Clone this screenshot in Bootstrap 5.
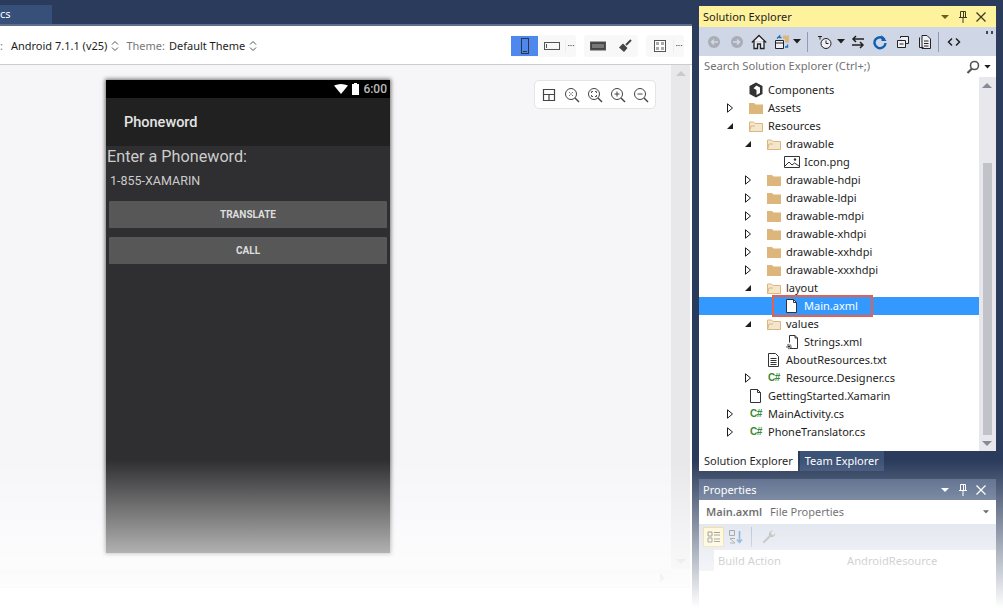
<!DOCTYPE html>
<html lang="en">
<head>
  <meta charset="utf-8">
  <title>Main.axml</title>
  <link href="https://cdn.jsdelivr.net/npm/bootstrap@5.3.2/dist/css/bootstrap.min.css" rel="stylesheet">
  <style>
    html, body { height: 608px; overflow: hidden; }
    body { background: #2a3b5b; font-family: "Noto Sans", "Liberation Sans", sans-serif; font-size: 11px; color: #1e1e1e; }
    .shell { width: 1003px; height: 608px; }
    .fade-out { position: absolute; inset: 0; pointer-events: none; background: linear-gradient(to bottom, rgba(255,255,255,0) 460px, #fff 608px); }

    /* left: designer */
    .left-col { width: 692px; background: #fff; }
    .tab-strip { height: 24px; padding-top: 5px; background: #2a3b5b; }
    .doc-tab { width: 52px; height: 19px; background: #36507a; color: #fff; line-height: 18px; text-align: left; overflow: hidden; }
    .tab-rule { height: 2px; background: #5f6e8a; }
    .design-bar { height: 39px; padding-top: 2px; background: #fff; border-bottom: 1px solid #ccc; }
    .bar-label { color: #777; }
    .updown { width: 8px; height: 12px; margin: 0 7px 0 4px; }
    .btn-grp { height: 22px; background: #f8f8f8; border-radius: 3px; }
    .bar-btn { width: 27px; height: 20px; }
    .bar-btn.is-on { background: #4d88ee; }
    .dots { width: 11px; text-align: center; font-size: 9px; line-height: 14px; color: #444; border-left: 1px solid #eee; }
    .canvas-wrap { height: 504px; }
    .canvas { background: #f6f5f8; padding: 15px 0 0 106px; }
    .vscroll { width: 19px; background: #e8e7ea; }
    .vscroll .scroll-up { left: 5px; border-bottom-color: #c9c9ce; }
    .vscroll .scroll-down { left: 5px; border-top-color: #c9c9ce; }
    .hscroll { height: 19px; background: #f0f0f0; border-bottom: 1px solid #ddd; margin-right: 2px; padding-right: 25px; }
    .hscroll-arrow { width: 0; height: 0; border: 5px solid transparent; border-left-color: #c9c9ce; border-right: 0; }
    .left-pad { width: 2px; background: #fff; }
    .zoom-tools { position: absolute; left: 534px; top: 15px; width: 122px; height: 29px; background: #fff; border: 1px solid #e4e4e4; border-radius: 5px; padding: 0 6px; }

    /* phone */
    .phone { width: 284px; height: 473px; background: #2f2e30; box-shadow: 0 0 4px 1px rgba(0,0,0,.55); font-family: Roboto, "Noto Sans", sans-serif; color: #e4e4e4; }
    .phone-status { height: 18px; background: #000; padding-right: 3px; font-size: 12px; color: #bbb; font-weight: 500; }
    .phone-bar { height: 48px; background: #222122; padding: 2px 0 0 18px; font-size: 14.5px; font-weight: 500; color: #e4e4e4; }
    .phone-label { font-size: 16.2px; line-height: 20px; padding: 0 1px; margin-top: 1px; color: #ccc; }
    .phone-input { font-size: 12.5px; line-height: 16px; margin: 6px 0 0 4px; color: #ccc; }
    .phone-btn { display: block; height: 27px; width: 278px; margin: 0 0 9px 3px; padding: 0; background: #575757; color: #dedede; border: 0; border-radius: 1px; font-size: 10px; font-weight: 700; line-height: 27px; }
    .phone-btn:hover { background: #575757; color: #dedede; }

    /* right: dock */
    .dock { width: 311px; padding: 6px 7px 0 7px; }
    .pane-head { height: 21px; padding: 0 7px 0 4px; background: #fff29d; }
    .pane-head.is-idle { background: #4d6082; color: #fff; }
    .head-title { padding-top: 1px; }
    .head-ico { width: 16px; height: 16px; margin-left: 2px; }
    .se-bar { height: 29px; background: #cfd6e5; padding-left: 4px; }
    .tb-slot { width: 22.5px; height: 22px; }
    .tb-slot svg { width: 16px; height: 16px; }
    .tb-dd { width: 8px; height: 5px; margin: 0 2px 0 0; }
    .tb-sep { width: 1px; height: 20px; background: #8e9bb3; margin: 0 6px 0 4px; }
    .tb-sep.is-tight { margin: 0 4px 0 1.5px; }
    .tb-sep.is-prop { margin: 0 5px 0 3px; }
    .overflow-mark { margin: 4px 3px 0 auto; }
    .search-box { height: 21px; background: #fff; padding: 0 5px 0 5px; color: #717171; font-size: 11.2px; }
    .tree-wrap { height: 374px; background: #fff; }
    .tree { padding-top: 4px; --bs-list-group-border-width: 0; }
    .tree-row { display: flex; align-items: center; height: 18px; padding: 0; border: 0; background: transparent; color: #1e1e1e; white-space: nowrap; }
    .tree-row.active { background: #3399ff; color: #fff; }
    .lv1 { padding-left: 26px; }
    .lv2 { padding-left: 44px; }
    .lv3 { padding-left: 62px; }
    .arrow-slot { width: 23px; height: 10px; flex: none; }
    .arrow-slot svg { width: 10px; height: 10px; display: block; }
    .ico-slot { width: 18px; height: 16px; flex: none; text-align: left; margin-right: 2px; }
    .ico-slot svg { width: 16px; height: 16px; display: block; }
    .csharp { font-family: "Liberation Sans", sans-serif; font-weight: 700; font-size: 10px; line-height: 16px; color: #388a34; letter-spacing: -.5px; padding-left: 2px; }
    .picked { display: inline-flex; align-items: center; height: 22px; margin-left: -12px; padding: 0 13px 0 10px; border: 2px solid #e8604c; }
    .tree-scroll { width: 17px; background: #e8e8ec; }
    .thumb { position: absolute; left: 4px; width: 9px; top: 86px; height: 272px; background: #c2c3c9; }
    .scroll-up { position: absolute; left: 3px; top: 6px; width: 0; height: 0; border: 5px solid transparent; border-bottom-color: #868999; border-top: 0; }
    .scroll-down { position: absolute; left: 3px; bottom: 5px; width: 0; height: 0; border: 5px solid transparent; border-top-color: #868999; border-bottom: 0; }
    .dock-tabs { height: 20px; }
    .dock-tab { height: 20px; padding: 0 5px; line-height: 20px; background: #3d5277; color: #fff; margin-left: 2px; }
    .dock-tab.is-on { background: #fff; color: #1e1e1e; margin-left: 0; }
    .props { margin-top: 8px; }
    .prop-target { height: 24px; background: #fff; padding: 0 7px; }
    .prop-bar { height: 26px; background: #cfd6e5; padding-left: 4px; }
    .prop-on { width: 21px; height: 20px; background: #fdf4bf; border: 1px solid #e5c365; }
    .prop-row { height: 21px; background: #fff; color: #6d6d6d; font-size: 11.2px; }
    .prop-gutter { width: 15px; background: #cfd6e5; }
    .prop-name { width: 133px; padding-left: 4px; line-height: 22px; }
    .prop-value { line-height: 22px; }
    .props-body { height: 60px; background: #fff; }
  </style>
</head>
<body>
  <svg width="0" height="0" class="position-absolute">
    <symbol id="tri-right" viewBox="0 0 10 10"><path d="M2.500.8 7.500 5l-5 4.200z" fill="#fff" stroke="#1e1e1e" stroke-width="1"/></symbol>
    <symbol id="tri-down" viewBox="0 0 10 10"><path d="M8 2v6H2z" fill="#1e1e1e"/></symbol>
    <symbol id="folder" viewBox="0 0 16 16"><path d="M1 3h5l1.500 1.500H15V14H1z" fill="#dcb67a"/></symbol>
    <symbol id="folder-open" viewBox="0 0 16 16"><path d="M1.500 4h4l1.500 1.500h7.500v8h-13z" fill="#f3e6cc" stroke="#dcb67a"/><path d="M1.500 13.500 3 8h4" fill="none" stroke="#dcb67a"/></symbol>
    <symbol id="file" viewBox="0 0 16 16"><path d="M2.500 1.500h7l3 3v10h-10z" fill="#fff" stroke="#333"/><path d="M9.500 1.500v3h3" fill="none" stroke="#333"/></symbol>
    <symbol id="file-text" viewBox="0 0 16 16"><path d="M2.500 1.500h7l3 3v10h-10z" fill="#fff" stroke="#333"/><path d="M4.500 6.500h6M4.500 8.500h6M4.500 10.500h6M4.500 12.500h6" stroke="#333"/></symbol>
    <symbol id="image" viewBox="0 0 16 16"><path d="M.5 2.500h15v11H.5z" fill="#fff" stroke="#333"/><path d="M1 12l4-4 3 3 2.500-2 4.500 3" fill="none" stroke="#333"/><circle cx="11" cy="5.500" r="1.200" fill="#333"/></symbol>
    <symbol id="xml-file" viewBox="0 0 16 16"><path d="M5.500 1.500h5.500l2.500 2.500v10.500H6" fill="#fff" stroke="#333"/><path d="M11 1.500V4h2.500M5.500 1.500v7" fill="none" stroke="#333"/><circle cx="5" cy="12.500" r="2.200" fill="none" stroke="#333" stroke-dasharray="1.500 1"/><rect x="3.700" y="11.500" width="2.600" height="2" fill="#333"/></symbol>
    <symbol id="cube" viewBox="0 0 16 16"><path d="M8 .5l6.500 3.500v8L8 15.500 1.500 12V4z" fill="#333"/><path d="M8.500 3.500l3.500 2v5.500l-3.500 2V8L5.500 6.200z" fill="#fff"/></symbol>
    <symbol id="updown" viewBox="0 0 8 12"><path d="M1 4.500 4 1.500l3 3M1 7.500l3 3 3-3" fill="none" stroke="#555"/></symbol>
    <symbol id="caret" viewBox="0 0 8 5"><path d="M0 0h8L4 4.500z" fill="#1e1e1e"/></symbol>
  </svg>

  <div class="shell d-flex">
    <div class="left-col d-flex flex-column flex-shrink-0">
      <div class="tab-strip"><div class="doc-tab">cs</div></div>
      <div class="tab-rule"></div>
      <div class="design-bar d-flex align-items-center text-nowrap">
        <span class="bar-label me-2">:</span>
        <span>Android 7.1.1 (v25)</span>
        <svg class="updown"><use href="#updown"/></svg>
        <span class="bar-label me-1">Theme:</span>
        <span>Default Theme</span>
        <svg class="updown"><use href="#updown"/></svg>
        <div class="ms-auto d-flex align-items-center gap-2 pe-2">
          <div class="btn-grp d-flex align-items-center">
            <div class="bar-btn is-on d-flex align-items-center justify-content-center">
              <svg width="10" height="16" viewBox="0 0 10 16"><rect x="1.500" y=".5" width="7" height="15" fill="none" stroke="#334"/><path d="M3 13.500h4" stroke="#334"/></svg>
            </div>
            <div class="bar-btn d-flex align-items-center justify-content-center">
              <svg width="16" height="10" viewBox="0 0 16 10"><rect x=".5" y="1.500" width="15" height="7" fill="none" stroke="#555"/><path d="M2.500 3v4" stroke="#555"/></svg>
            </div>
            <div class="dots">&#183;&#183;&#183;</div>
          </div>
          <div class="btn-grp d-flex align-items-center">
            <div class="bar-btn d-flex align-items-center justify-content-center">
              <svg width="16" height="10" viewBox="0 0 16 10"><rect x=".5" y="1" width="15" height="8" fill="#444" stroke="#555"/><rect x="2" y="3" width="12" height="4" fill="#777"/></svg>
            </div>
            <div class="bar-btn d-flex align-items-center justify-content-center">
              <svg width="14" height="14" viewBox="0 0 14 14"><path d="M13 1 8 6" stroke="#444" stroke-width="2"/><path d="M5 4.500 9.500 9 6 13 1 8.500z" fill="#444"/></svg>
            </div>
          </div>
          <div class="btn-grp d-flex align-items-center">
            <div class="bar-btn d-flex align-items-center justify-content-center">
              <svg width="12" height="12" viewBox="0 0 12 12"><rect x=".5" y=".5" width="11" height="11" fill="#fff" stroke="#555"/><path d="M2 2h3v3H2zM7 2h3v3H7zM2 7h3v3H2zM7 7h3v3H7z" fill="#aaa"/></svg>
            </div>
            <div class="dots">&#183;&#183;&#183;</div>
          </div>
        </div>
      </div>
      <div class="canvas-wrap d-flex">
        <div class="canvas flex-grow-1 position-relative">
          <div class="phone">
            <div class="phone-status d-flex align-items-center justify-content-end">
              <svg class="me-1" width="14" height="10" viewBox="0 0 14 10"><path d="M0 1.500Q7-1.500 14 1.500L7 10z" fill="#fff"/></svg>
              <svg class="me-1" width="7" height="12" viewBox="0 0 7 12"><path d="M2 0h3v1h2v11H0V1h2z" fill="#fff"/></svg>
              <span>6:00</span>
            </div>
            <div class="phone-bar d-flex align-items-center">Phoneword</div>
            <div class="phone-label">Enter a Phoneword:</div>
            <div class="phone-input">1-855-XAMARIN</div>
            <div class="mt-2 pt-1">
              <button class="btn phone-btn" type="button">TRANSLATE</button>
              <button class="btn phone-btn" type="button">CALL</button>
            </div>
          </div>
          <div class="zoom-tools d-flex align-items-center justify-content-between">
            <svg width="16" height="16" viewBox="0 0 16 16"><path d="M2.500 2.500h11v11h-11zM2.500 7.500h11M8 7.500v6" fill="none" stroke="#444" stroke-width="1.200"/></svg>
            <svg width="16" height="16" viewBox="0 0 16 16"><circle cx="7" cy="7" r="5.500" fill="none" stroke="#444"/><path d="M11 11l4 4" stroke="#444" stroke-width="1.500"/><path d="M5 5l1.500 1.500M9 5 7.500 6.500M5 9l1.500-1.500M9 9 7.500 7.500" stroke="#777"/></svg>
            <svg width="16" height="16" viewBox="0 0 16 16"><circle cx="7" cy="7" r="5.500" fill="none" stroke="#444"/><path d="M11 11l4 4" stroke="#444" stroke-width="1.500"/><path d="M4.500 6V4.500H6M8 4.500h1.500V6M4.500 8v1.500H6M9.500 8v1.500H8" fill="none" stroke="#555"/></svg>
            <svg width="16" height="16" viewBox="0 0 16 16"><circle cx="7" cy="7" r="5.500" fill="none" stroke="#444"/><path d="M11 11l4 4" stroke="#444" stroke-width="1.500"/><path d="M4.500 7h5M7 4.500v5" stroke="#444"/></svg>
            <svg width="16" height="16" viewBox="0 0 16 16"><circle cx="7" cy="7" r="5.500" fill="none" stroke="#444"/><path d="M11 11l4 4" stroke="#444" stroke-width="1.500"/><path d="M4.500 7h5" stroke="#444"/></svg>
          </div>
        </div>
        <div class="vscroll position-relative"><span class="scroll-up"></span><span class="scroll-down"></span></div>
        <div class="left-pad"></div>
      </div>
      <div class="hscroll d-flex align-items-center justify-content-end"><span class="hscroll-arrow"></span></div>
      <div class="flex-grow-1 bg-white"></div>
    </div>

    <div class="dock flex-grow-1 d-flex flex-column">
      <div>
        <div class="pane-head d-flex align-items-center">
          <span class="head-title">Solution Explorer</span>
          <span class="ms-auto d-flex align-items-center">
            <svg class="head-ico" viewBox="0 0 16 16"><path d="M4 6h8L8 10z" fill="#6b5f20"/></svg>
            <svg class="head-ico" viewBox="0 0 16 16"><path d="M5.500 2.500h5v6h-5zM4 8.500h8M8 8.500V14M8.500 3v5" fill="none" stroke="#3c3a20"/></svg>
            <svg class="head-ico" viewBox="0 0 16 16"><path d="M3.500 3.500l9 9M12.500 3.500l-9 9" stroke="#3c3a20" stroke-width="1.300"/></svg>
          </span>
        </div>
        <div class="se-bar d-flex align-items-center">
          <div class="tb-slot d-flex align-items-center justify-content-center"><svg viewBox="0 0 16 16"><circle cx="8" cy="8" r="6" fill="#a8adb8"/><path d="M12 8H6M8 5.500 5.500 8 8 10.500" fill="none" stroke="#d4d9e4" stroke-width="1.500"/></svg></div>
          <div class="tb-slot d-flex align-items-center justify-content-center"><svg viewBox="0 0 16 16"><circle cx="8" cy="8" r="6" fill="#a8adb8"/><path d="M4 8h6M8 5.500 10.500 8 8 10.500" fill="none" stroke="#d4d9e4" stroke-width="1.500"/></svg></div>
          <div class="tb-slot d-flex align-items-center justify-content-center"><svg viewBox="0 0 16 16"><path d="M.8 8.500 8 1.500l7.200 7M3 7v7.500h3.500V10h3v4.500H13V7" fill="#eef0f5" stroke="#222" stroke-width="1.300"/></svg></div>
          <div class="tb-slot d-flex align-items-center justify-content-center"><svg viewBox="0 0 16 16"><path d="M1.500 6.500h8v8h-8z" fill="#eef0f5" stroke="#222"/><path d="M1.500 9h8" stroke="#222"/><path d="M9 1.500h6v7h-4V5H9z" fill="#dcb67a"/><path d="M3 4.500 5.500 2v1.500h2M13.500 10.500V13H11" fill="none" stroke="#1a6fc0" stroke-width="1.300"/></svg></div>
          <svg class="tb-dd"><use href="#caret"/></svg>
          <div class="tb-sep"></div>
          <div class="tb-slot d-flex align-items-center justify-content-center"><svg viewBox="0 0 16 16"><circle cx="9" cy="9.500" r="5" fill="#eef0f5" stroke="#222"/><path d="M9 6.500v3h2.500M1 2.500h4M3 2.500v3" fill="none" stroke="#222"/></svg></div>
          <svg class="tb-dd"><use href="#caret"/></svg>
          <div class="tb-slot d-flex align-items-center justify-content-center"><svg viewBox="0 0 16 16"><path d="M14 5H3M6 2 3 5l3 3M2 11h11M10 8l3 3-3 3" fill="none" stroke="#222" stroke-width="1.500"/></svg></div>
          <div class="tb-slot d-flex align-items-center justify-content-center"><svg viewBox="0 0 16 16"><path d="M12.500 5.500A5.500 5.500 0 1 0 13.500 9" fill="none" stroke="#0f5fb0" stroke-width="2.400"/><path d="M9.500 1v6h5z" fill="#0f5fb0"/></svg></div>
          <div class="tb-slot d-flex align-items-center justify-content-center"><svg viewBox="0 0 16 16"><path d="M2.500 6.500h8v7h-8zM5.500 4v-1.500h8v7H11" fill="#eef0f5" stroke="#222"/><path d="M4.500 10h4" stroke="#222"/></svg></div>
          <div class="tb-slot d-flex align-items-center justify-content-center"><svg viewBox="0 0 16 16"><path d="M2.500 3.500v10h4M5 1.500h5l3.500 3.500v9.500H5z" fill="#eef0f5" stroke="#222"/><path d="M7 7h4.500M7 9.500h4.500M7 12h4.500" stroke="#222"/></svg></div>
          <div class="tb-sep is-tight"></div>
          <div class="tb-slot d-flex align-items-center justify-content-center"><svg viewBox="0 0 16 16"><path d="M6 4.500 2.500 8 6 11.500M10 4.500 13.500 8 10 11.500" fill="none" stroke="#222" stroke-width="1.500"/></svg></div>
          <svg class="overflow-mark align-self-start" width="7" height="4" viewBox="0 0 7 4"><path d="M0 0h2v3H0zM5 0h2v3H5z" fill="#444"/></svg>
        </div>
        <div class="search-box d-flex align-items-center">
          <span>Search Solution Explorer (Ctrl+;)</span>
          <svg class="ms-auto" width="14" height="14" viewBox="0 0 14 14"><circle cx="8.500" cy="5.500" r="4" fill="none" stroke="#555" stroke-width="1.600"/><path d="M6 8.500 1.500 13" stroke="#555" stroke-width="2.200"/></svg>
          <svg class="ms-1" width="7" height="4"><use href="#caret"/></svg>
        </div>
        <div class="tree-wrap d-flex">
          <div class="tree list-group list-group-flush rounded-0 flex-grow-1">
            <div class="list-group-item tree-row lv1"><span class="arrow-slot"></span><span class="ico-slot"><svg><use href="#cube"/></svg></span>Components</div>
            <div class="list-group-item tree-row lv1"><span class="arrow-slot"><svg><use href="#tri-right"/></svg></span><span class="ico-slot"><svg><use href="#folder"/></svg></span>Assets</div>
            <div class="list-group-item tree-row lv1"><span class="arrow-slot"><svg><use href="#tri-down"/></svg></span><span class="ico-slot"><svg><use href="#folder-open"/></svg></span>Resources</div>
            <div class="list-group-item tree-row lv2"><span class="arrow-slot"><svg><use href="#tri-down"/></svg></span><span class="ico-slot"><svg><use href="#folder-open"/></svg></span>drawable</div>
            <div class="list-group-item tree-row lv3"><span class="arrow-slot"></span><span class="ico-slot"><svg><use href="#image"/></svg></span>Icon.png</div>
            <div class="list-group-item tree-row lv2"><span class="arrow-slot"><svg><use href="#tri-right"/></svg></span><span class="ico-slot"><svg><use href="#folder"/></svg></span>drawable-hdpi</div>
            <div class="list-group-item tree-row lv2"><span class="arrow-slot"><svg><use href="#tri-right"/></svg></span><span class="ico-slot"><svg><use href="#folder"/></svg></span>drawable-ldpi</div>
            <div class="list-group-item tree-row lv2"><span class="arrow-slot"><svg><use href="#tri-right"/></svg></span><span class="ico-slot"><svg><use href="#folder"/></svg></span>drawable-mdpi</div>
            <div class="list-group-item tree-row lv2"><span class="arrow-slot"><svg><use href="#tri-right"/></svg></span><span class="ico-slot"><svg><use href="#folder"/></svg></span>drawable-xhdpi</div>
            <div class="list-group-item tree-row lv2"><span class="arrow-slot"><svg><use href="#tri-right"/></svg></span><span class="ico-slot"><svg><use href="#folder"/></svg></span>drawable-xxhdpi</div>
            <div class="list-group-item tree-row lv2"><span class="arrow-slot"><svg><use href="#tri-right"/></svg></span><span class="ico-slot"><svg><use href="#folder"/></svg></span>drawable-xxxhdpi</div>
            <div class="list-group-item tree-row lv2"><span class="arrow-slot"><svg><use href="#tri-down"/></svg></span><span class="ico-slot"><svg><use href="#folder-open"/></svg></span>layout</div>
            <div class="list-group-item tree-row lv3 active"><span class="arrow-slot"></span><span class="picked"><span class="ico-slot"><svg><use href="#file"/></svg></span>Main.axml</span></div>
            <div class="list-group-item tree-row lv2"><span class="arrow-slot"><svg><use href="#tri-down"/></svg></span><span class="ico-slot"><svg><use href="#folder-open"/></svg></span>values</div>
            <div class="list-group-item tree-row lv3"><span class="arrow-slot"></span><span class="ico-slot"><svg><use href="#xml-file"/></svg></span>Strings.xml</div>
            <div class="list-group-item tree-row lv2"><span class="arrow-slot"></span><span class="ico-slot"><svg><use href="#file-text"/></svg></span>AboutResources.txt</div>
            <div class="list-group-item tree-row lv2"><span class="arrow-slot"><svg><use href="#tri-right"/></svg></span><span class="ico-slot csharp">C#</span>Resource.Designer.cs</div>
            <div class="list-group-item tree-row lv1"><span class="arrow-slot"></span><span class="ico-slot"><svg><use href="#file"/></svg></span>GettingStarted.Xamarin</div>
            <div class="list-group-item tree-row lv1"><span class="arrow-slot"><svg><use href="#tri-right"/></svg></span><span class="ico-slot csharp">C#</span>MainActivity.cs</div>
            <div class="list-group-item tree-row lv1"><span class="arrow-slot"><svg><use href="#tri-right"/></svg></span><span class="ico-slot csharp">C#</span>PhoneTranslator.cs</div>
          </div>
          <div class="tree-scroll position-relative"><span class="scroll-up"></span><span class="thumb"></span><span class="scroll-down"></span></div>
        </div>
        <div class="dock-tabs d-flex">
          <div class="dock-tab is-on">Solution Explorer</div>
          <div class="dock-tab">Team Explorer</div>
        </div>
      </div>

      <div class="props">
        <div class="pane-head is-idle d-flex align-items-center">
          <span class="head-title">Properties</span>
          <span class="ms-auto d-flex align-items-center">
            <svg class="head-ico" viewBox="0 0 16 16"><path d="M4 6h8L8 10z" fill="#fff"/></svg>
            <svg class="head-ico" viewBox="0 0 16 16"><path d="M5.500 2.500h5v6h-5zM4 8.500h8M8 8.500V14M8.500 3v5" fill="none" stroke="#fff"/></svg>
            <svg class="head-ico" viewBox="0 0 16 16"><path d="M3.500 3.500l9 9M12.500 3.500l-9 9" stroke="#fff" stroke-width="1.300"/></svg>
          </span>
        </div>
        <div class="prop-target d-flex align-items-center">
          <span class="fw-semibold me-2">Main.axml</span>
          <span>File Properties</span>
          <svg class="ms-auto" width="6" height="4"><use href="#caret"/></svg>
        </div>
        <div class="prop-bar d-flex align-items-center gap-1">
          <div class="prop-on d-flex align-items-center justify-content-center">
            <svg width="14" height="14" viewBox="0 0 14 14"><path d="M1 2h4v4H1zM1 8h4v4H1zM7 2.500h6M7 5h6M7 9h6M7 11.500h6" fill="none" stroke="#444"/></svg>
          </div>
          <svg width="16" height="16" viewBox="0 0 16 16"><path d="M1.500 1.500h5v5h-5zM2 14h5M7 9.500H2l5 4.500" fill="none" stroke="#555"/><path d="M11.500 2v11M9 10.500l2.500 3 2.500-3" fill="none" stroke="#1f6fb5" stroke-width="1.600"/></svg>
          <div class="tb-sep is-prop"></div>
          <svg width="16" height="16" viewBox="0 0 16 16"><path d="M14.500 4 12 6.500 9.500 4 12 1.500a4 4 0 0 0-4 5L1.500 13l1.500 1.500L9.500 8a4 4 0 0 0 5-4z" fill="#8d8d8d"/></svg>
        </div>
        <div class="prop-row d-flex">
          <div class="prop-gutter"></div>
          <div class="prop-name">Build Action</div>
          <div class="prop-value">AndroidResource</div>
        </div>
        <div class="props-body"></div>
      </div>
    </div>
    <div class="fade-out"></div>
  </div>
  <script src="https://cdn.jsdelivr.net/npm/bootstrap@5.3.2/dist/js/bootstrap.bundle.min.js"></script>
</body>
</html>
